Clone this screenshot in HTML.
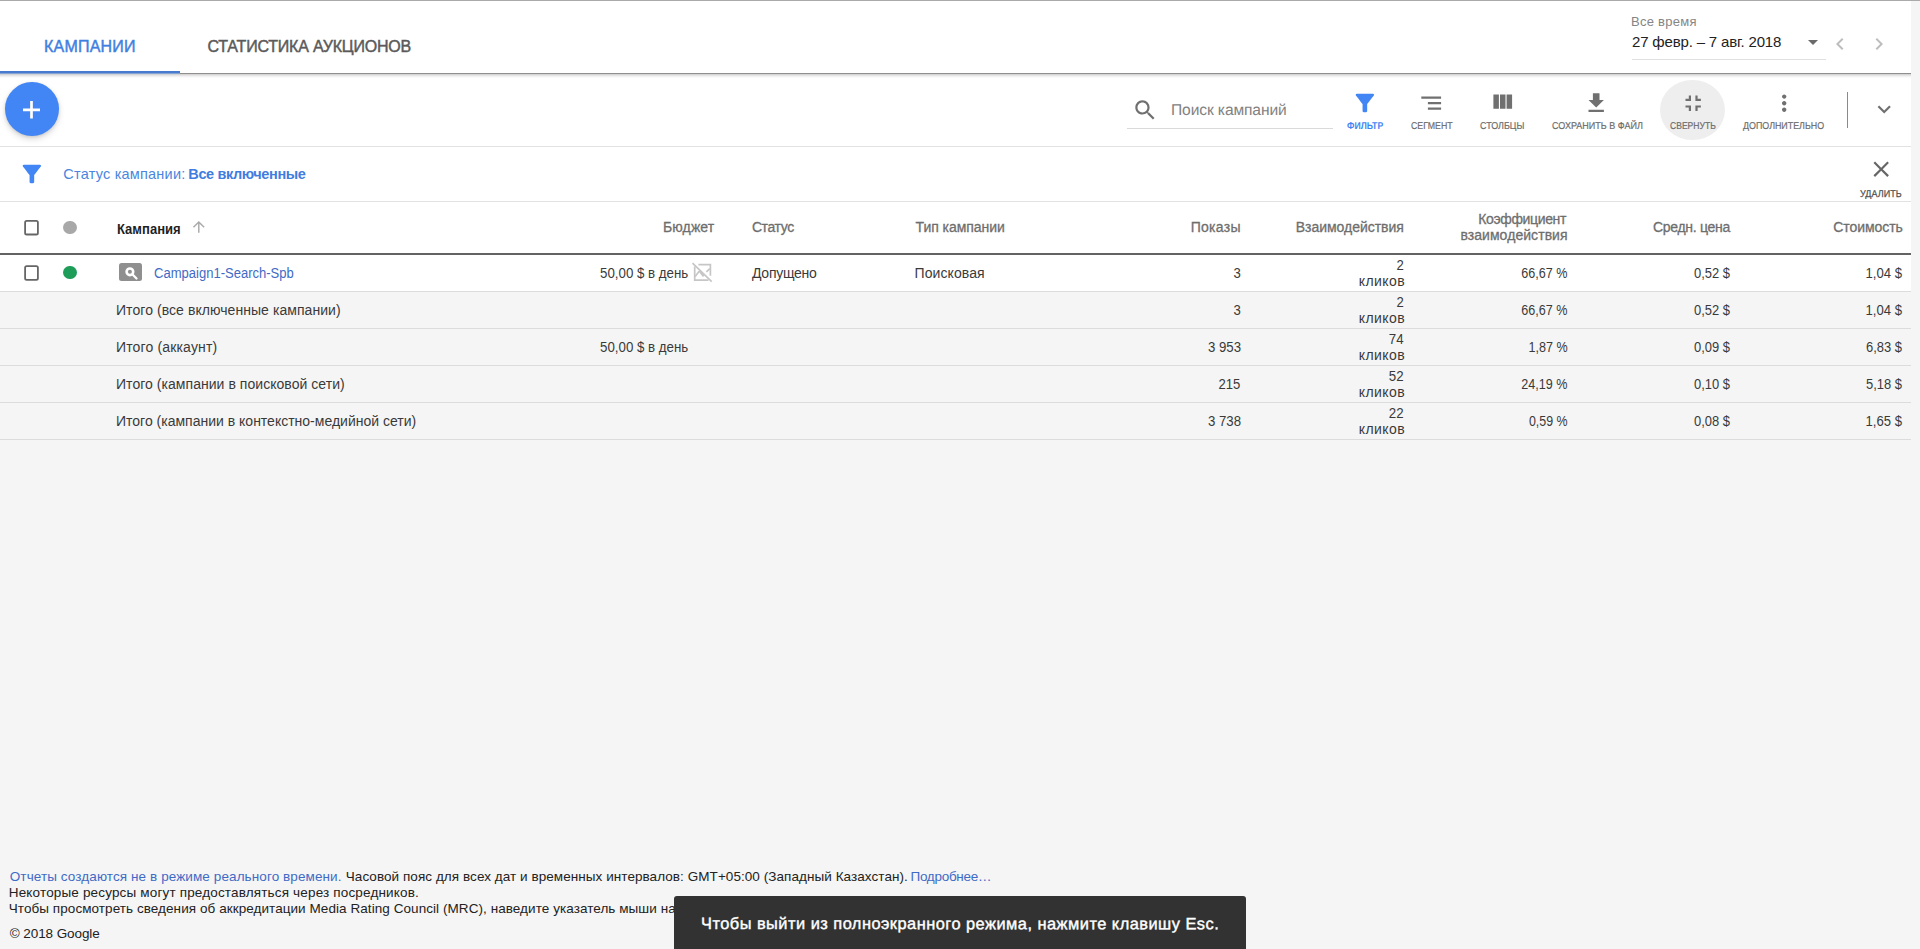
<!DOCTYPE html>
<html lang="ru">
<head>
<meta charset="utf-8">
<title>Кампании</title>
<style>
html,body{margin:0;padding:0;}
body{width:1920px;height:949px;overflow:hidden;background:#f5f5f5;position:relative;font-family:"Liberation Sans",sans-serif;}
.a{position:absolute;}
.t{position:absolute;white-space:nowrap;}
#page{position:absolute;left:0;top:0;width:1920px;height:949px;overflow:hidden;}
#topbar{left:0;top:0;width:1911px;height:73px;background:#fff;}
#topline{left:0;top:0;width:1920px;height:1px;background:#aaaaaa;}
#tabshadow{left:0;top:74px;width:1911px;height:4px;background:linear-gradient(rgba(0,0,0,.20) 0,rgba(0,0,0,.07) 2px,rgba(0,0,0,0) 4px);}
#tabborder{left:0;top:73px;width:1911px;height:1px;background:#8f8f8f;}
#tabline{left:0;top:71px;width:180px;height:2px;background:#487ad0;}
#tabline2{left:0;top:73px;width:180px;height:1px;background:#86a3d6;}
#toolbar{left:0;top:73px;width:1911px;height:73px;background:#fff;border-bottom:1px solid #e2e2e2;}
#filterrow{left:0;top:147px;width:1911px;height:54px;background:#fff;border-bottom:1px solid #e2e2e2;}
#thead{left:0;top:202px;width:1911px;height:51px;background:#fff;border-bottom:2px solid #636363;}
.row{left:0;width:1911px;height:36px;border-bottom:1px solid #dcdcdc;background:#f5f5f5;}
#row1{background:#fff;}
#fab{left:5.2px;top:82px;width:53.8px;height:53.8px;border-radius:50%;background:#4285f4;box-shadow:0 3px 6px rgba(0,0,0,.15),0 1px 3px rgba(0,0,0,.10);}
#hover{left:1660.3px;top:80px;width:64.4px;height:60px;border-radius:50%;background:#eeeeee;}
.cb{width:11px;height:11.8px;border:1.8px solid #686868;border-radius:2.2px;background:#fff;}
.dot{width:13.4px;height:13.4px;border-radius:50%;}
#toast{left:674px;top:896px;width:572px;height:60px;background:#323232;border-radius:3px 3px 0 0;z-index:9;}
svg{position:absolute;overflow:visible;}
</style>
</head>
<body>
<div id="page">
<div class="a" id="topbar"></div>
<div class="a" id="toolbar"></div>
<div class="a" id="tabshadow"></div>
<div class="a" id="tabborder"></div>
<div class="a" id="tabline"></div>
<div class="a" id="tabline2"></div>
<div class="a" id="topline"></div>
<div class="a" id="filterrow"></div>
<div class="a" id="thead"></div>
<div class="a row" id="row1" style="top:255px"></div>
<div class="a row" style="top:292px"></div>
<div class="a row" style="top:329px"></div>
<div class="a row" style="top:366px"></div>
<div class="a row" style="top:403px"></div>

<!-- date range -->
<div class="a" style="left:1632px;top:59px;width:194px;height:1px;background:#e0e0e0"></div>
<svg style="left:1801.00px;top:30.00px" width="24.00" height="24.00" viewBox="0 0 24 24"><path d="M7 10l5 5 5-5z" fill="#6a6a6a"/></svg>
<svg style="left:1827.80px;top:31.75px" width="24.00" height="24.00" viewBox="0 0 24 24"><path d="M15.41 7.41L14 6l-6 6 6 6 1.41-1.41L10.830 12z" fill="#bdbdbd"/></svg>
<svg style="left:1867.40px;top:31.75px" width="24.00" height="24.00" viewBox="0 0 24 24"><path d="M10 6L8.590 7.410 13.170 12l-4.580 4.590L10 18l6-6z" fill="#bdbdbd"/></svg>
<!-- FAB -->
<div class="a" id="fab"></div>
<svg style="left:23px;top:100.7px" width="17" height="17.6" viewBox="0 0 17 17.6"><path d="M8.5 0v17.6M0 8.8h17" stroke="#fff" stroke-width="2.7" fill="none"/></svg>
<!-- search -->
<svg style="left:1132.00px;top:96.90px" width="26.40" height="26.40" viewBox="0 0 24 24"><path d="M15.5 14h-.79l-.28-.27C15.410 12.590 16 11.110 16 9.500 16 5.910 13.090 3 9.500 3S3 5.910 3 9.500 5.910 16 9.500 16c1.610 0 3.090-.590 4.230-1.570l.27.28v.79l5 4.990L20.490 19l-4.990-5zm-6 0C7.010 14 5 11.990 5 9.500S7.010 5 9.500 5 14 7.010 14 9.500 11.990 14 9.500 14z" fill="#707070"/></svg>
<div class="a" style="left:1127px;top:128px;width:206px;height:1px;background:#dadada"></div>
<!-- toolbar icons -->
<svg style="left:1350.92px;top:88.55px" width="27.75" height="27.75" viewBox="0 0 24 24"><path d="M4.25 5.61C6.27 8.2 10 13 10 13v6c0 .55.45 1 1 1h2c.55 0 1-.45 1-1v-6s3.72-4.800 5.740-7.390c.51-.66.04-1.61-.79-1.61H5.040c-.83 0-1.300.950-.790 1.610z" fill="#4285f4"/></svg>
<svg style="left:1418.10px;top:89.60px" width="26.40" height="26.40" viewBox="0 0 24 24"><path d="M9 18h12v-2H9v2zM3 6v2h18V6H3zm6 7h12v-2H9v2z" fill="#707070"/></svg>
<svg style="left:1489.00px;top:89.30px" width="26.40" height="26.40" viewBox="0 0 24 24"><path d="M10 18h5V5h-5v13zm-6 0h5V5H4v13zM16 5v13h5V5h-5z" fill="#707070"/></svg>
<svg style="left:1583.40px;top:89.80px" width="26.40" height="26.40" viewBox="0 0 24 24"><path d="M19 9h-4V3H9v6H5l7 7 7-7zM5 18v2h14v-2H5z" fill="#707070"/></svg>
<div class="a" id="hover"></div>
<svg style="left:1679.50px;top:89.70px" width="26.40" height="26.40" viewBox="0 0 24 24"><path d="M5 16h3v3h2v-5H5v2zm3-8H5v2h5V5H8v3zm6 11h2v-3h3v-2h-5v5zm2-11V5h-2v5h5V8h-3z" fill="#707070"/></svg>
<svg style="left:1770.80px;top:89.80px" width="26.40" height="26.40" viewBox="0 0 24 24"><path d="M12 8c1.100 0 2-.9 2-2s-.9-2-2-2-2 .9-2 2 .9 2 2 2zm0 2c-1.100 0-2 .9-2 2s.9 2 2 2 2-.9 2-2-.9-2-2-2zm0 6c-1.100 0-2 .9-2 2s.9 2 2 2 2-.9 2-2-.9-2-2-2z" fill="#707070"/></svg>
<div class="a" style="left:1847px;top:92px;width:1px;height:36px;background:#8a8a8a"></div>
<svg style="left:1870.90px;top:95.90px" width="26.40" height="26.40" viewBox="0 0 24 24"><path d="M16.590 8.590L12 13.170 7.410 8.590 6 10l6 6 6-6z" fill="#707070"/></svg>
<!-- filter row -->
<svg style="left:17.57px;top:160.40px" width="27.75" height="27.75" viewBox="0 0 24 24"><path d="M4.25 5.61C6.27 8.2 10 13 10 13v6c0 .55.45 1 1 1h2c.55 0 1-.45 1-1v-6s3.72-4.800 5.740-7.390c.51-.66.04-1.61-.79-1.61H5.040c-.83 0-1.300.950-.790 1.610z" fill="#4285f4"/></svg>
<svg style="left:1867.80px;top:156.20px" width="26.40" height="26.40" viewBox="0 0 24 24"><path d="M19 6.410L17.590 5 12 10.590 6.410 5 5 6.410 10.590 12 5 17.590 6.410 19 12 13.410 17.590 19 19 17.590 13.410 12z" fill="#666"/></svg>
<!-- header -->
<svg style="left:20px;top:215px" width="24" height="24"><rect x="5.10" y="5.80" width="12.8" height="13.7" rx="1.6" fill="#fff" stroke="#666" stroke-width="1.8"/></svg>
<div class="a dot" style="left:63.3px;top:220.7px;background:#a8a8a8"></div>
<svg style="left:190.20px;top:218.10px" width="17.60" height="17.60" viewBox="0 0 24 24"><path d="M4 12l1.410 1.410L11 7.830V20h2V7.830l5.580 5.590L20 12l-8-8-8 8z" fill="#ababab"/></svg>
<!-- row 1 -->
<svg style="left:20px;top:261px" width="24" height="24"><rect x="5.10" y="5.10" width="12.8" height="13.7" rx="1.6" fill="#fff" stroke="#666" stroke-width="1.8"/></svg>
<div class="a dot" style="left:63.3px;top:265.9px;background:#1e9d58"></div>
<div class="a" style="left:119.3px;top:263.3px;width:22.7px;height:17.7px;border-radius:2.5px;background:#8f8f8f"></div>
<svg style="left:119px;top:263px" width="24" height="19" viewBox="0 0 24 19"><circle cx="10.9" cy="8.800" r="3.300" fill="none" stroke="#fff" stroke-width="2.600"/><path d="M13.600 11.500L17.500 15.500" stroke="#fff" stroke-width="2.300" stroke-linecap="round" fill="none"/></svg>
<svg style="left:686px;top:258px" width="34" height="28" viewBox="0 0 34 28"><g fill="none" stroke="#c6c6c6" stroke-width="1.7"><path d="M6.500 5.200L25.700 23.600"/><path d="M12.400 6.700H24.400V17.700"/><path d="M8.700 8.500V22.100H22.500"/><path d="M9.100 18.500L13.200 13.300"/><path d="M13.500 12.800L17.700 18.300" stroke-width="2.200"/><path d="M20.400 13.900L23.800 10.700"/></g></svg>

<!-- toast -->
<div class="a" id="toast"></div>
<span class="t" id="tab1" style="top:39.00px;font-size:16px;line-height:16px;color:#3f7fe0;letter-spacing:0.208px;left:44.00px;-webkit-text-stroke:0.45px;">КАМПАНИИ</span>
<span class="t" id="tab2" style="top:39.00px;font-size:16px;line-height:16px;color:#5a5a5a;letter-spacing:-0.207px;left:207.50px;-webkit-text-stroke:0.45px;">СТАТИСТИКА АУКЦИОНОВ</span>
<span class="t" id="d1" style="top:15.00px;font-size:13px;line-height:13px;color:#858585;letter-spacing:0.260px;left:1631.00px;">Все время</span>
<span class="t" id="d2" style="top:34.00px;font-size:15px;line-height:15px;color:#222;letter-spacing:-0.167px;left:1632.00px;">27 февр. – 7 авг. 2018</span>
<span class="t" id="s1" style="top:101.93px;font-size:15.6px;line-height:15.6px;color:#828282;letter-spacing:-0.118px;left:1171.00px;transform:matrix(1.0000,0.0006,0,1,0,0);transform-origin:0 0;">Поиск кампаний</span>
<span class="t" id="b1" style="top:120.97px;font-size:10px;line-height:10px;color:#4285f4;font-weight:700;left:1346.50px;transform:matrix(0.8685,0.0006,0,1,0,0);transform-origin:0 0;">ФИЛЬТР</span>
<span class="t" id="b2" style="top:120.97px;font-size:10px;line-height:10px;color:#6c6c6c;left:1410.50px;transform:matrix(0.8774,0.0006,0,1,0,0);transform-origin:0 0;-webkit-text-stroke:0.2px;">СЕГМЕНТ</span>
<span class="t" id="b3" style="top:120.97px;font-size:10px;line-height:10px;color:#6c6c6c;left:1479.50px;transform:matrix(0.8947,0.0006,0,1,0,0);transform-origin:0 0;-webkit-text-stroke:0.2px;">СТОЛБЦЫ</span>
<span class="t" id="b4" style="top:120.94px;font-size:10px;line-height:10px;color:#6c6c6c;left:1551.70px;transform:matrix(0.9010,0.0006,0,1,0,0);transform-origin:0 0;-webkit-text-stroke:0.2px;">СОХРАНИТЬ В ФАЙЛ</span>
<span class="t" id="b5" style="top:120.97px;font-size:10px;line-height:10px;color:#6c6c6c;left:1669.60px;transform:matrix(0.8569,0.0006,0,1,0,0);transform-origin:0 0;-webkit-text-stroke:0.2px;">СВЕРНУТЬ</span>
<span class="t" id="b6" style="top:120.95px;font-size:10px;line-height:10px;color:#6c6c6c;left:1743.30px;transform:matrix(0.8885,0.0006,0,1,0,0);transform-origin:0 0;-webkit-text-stroke:0.2px;">ДОПОЛНИТЕЛЬНО</span>
<span class="t" id="b7" style="top:188.97px;font-size:10px;line-height:10px;color:#505050;left:1860.00px;transform:matrix(0.9047,0.0006,0,1,0,0);transform-origin:0 0;-webkit-text-stroke:0.25px;">УДАЛИТЬ</span>
<span class="t" id="f1" style="top:167.00px;font-size:14.5px;line-height:14.5px;color:#4a86e0;letter-spacing:0.214px;left:63.30px;">Статус кампании:</span>
<span class="t" id="f2" style="top:167.00px;font-size:14.5px;line-height:14.5px;color:#3f7de0;font-weight:700;letter-spacing:-0.377px;left:188.30px;">Все включенные</span>
<span class="t" id="h1" style="top:222.00px;font-size:14px;line-height:14px;color:#1f1f1f;font-weight:700;left:117.30px;transform:scaleX(0.9316);transform-origin:0 0;">Кампания</span>
<span class="t" id="h2" style="top:220.00px;font-size:14px;line-height:14px;color:#6e6e6e;letter-spacing:0.113px;left:663.00px;-webkit-text-stroke:0.3px;">Бюджет</span>
<span class="t" id="h3" style="top:220.00px;font-size:14px;line-height:14px;color:#6e6e6e;letter-spacing:-0.391px;left:751.90px;-webkit-text-stroke:0.3px;">Статус</span>
<span class="t" id="h4" style="top:220.00px;font-size:14px;line-height:14px;color:#6e6e6e;letter-spacing:-0.045px;left:915.50px;-webkit-text-stroke:0.3px;">Тип кампании</span>
<span class="t" id="h5" style="top:220.00px;font-size:14px;line-height:14px;color:#6e6e6e;letter-spacing:0.274px;right:679.26px;-webkit-text-stroke:0.3px;">Показы</span>
<span class="t" id="h6" style="top:220.00px;font-size:14px;line-height:14px;color:#6e6e6e;letter-spacing:-0.024px;right:516.14px;-webkit-text-stroke:0.3px;">Взаимодействия</span>
<span class="t" id="h7a" style="top:212.00px;font-size:14px;line-height:14px;color:#6e6e6e;letter-spacing:-0.350px;right:353.94px;-webkit-text-stroke:0.3px;">Коэффициент</span>
<span class="t" id="h7b" style="top:228.00px;font-size:14px;line-height:14px;color:#6e6e6e;letter-spacing:0.057px;right:352.36px;-webkit-text-stroke:0.3px;">взаимодействия</span>
<span class="t" id="h8" style="top:220.00px;font-size:14px;line-height:14px;color:#6e6e6e;letter-spacing:-0.293px;right:190.01px;-webkit-text-stroke:0.3px;">Средн. цена</span>
<span class="t" id="h9" style="top:220.00px;font-size:14px;line-height:14px;color:#6e6e6e;letter-spacing:-0.062px;right:17.27px;-webkit-text-stroke:0.3px;">Стоимость</span>
<span class="t" id="r1n" style="top:266.00px;font-size:14px;line-height:14px;color:#3f6bc6;left:153.50px;transform:scaleX(0.9308);transform-origin:0 0;">Campaign1-Search-Spb</span>
<span class="t" id="r1b" style="top:266.00px;font-size:14px;line-height:14px;color:#3a3a3a;left:599.50px;transform:scaleX(0.9502);transform-origin:0 0;">50,00 $ в день</span>
<span class="t" id="r1s" style="top:266.00px;font-size:14px;line-height:14px;color:#3a3a3a;letter-spacing:-0.269px;left:752.00px;">Допущено</span>
<span class="t" id="r1t" style="top:266.00px;font-size:14px;line-height:14px;color:#3a3a3a;letter-spacing:0.087px;left:914.50px;">Поисковая</span>
<span class="t" id="r2n" style="top:303.00px;font-size:14px;line-height:14px;color:#3a3a3a;letter-spacing:0.062px;left:116.00px;">Итого (все включенные кампании)</span>
<span class="t" id="r3n" style="top:340.00px;font-size:14px;line-height:14px;color:#3a3a3a;letter-spacing:0.153px;left:116.00px;">Итого (аккаунт)</span>
<span class="t" id="r3b" style="top:340.00px;font-size:14px;line-height:14px;color:#3a3a3a;left:599.50px;transform:scaleX(0.9502);transform-origin:0 0;">50,00 $ в день</span>
<span class="t" id="r4n" style="top:377.00px;font-size:14px;line-height:14px;color:#3a3a3a;letter-spacing:0.043px;left:116.00px;">Итого (кампании в поисковой сети)</span>
<span class="t" id="r5n" style="top:414.00px;font-size:14px;line-height:14px;color:#3a3a3a;letter-spacing:0.001px;left:116.00px;">Итого (кампании в контекстно-медийной сети)</span>
<span class="t" id="n0a" style="top:266.00px;font-size:14px;line-height:14px;color:#3a3a3a;right:679.40px;transform:scaleX(0.9375);transform-origin:100% 0;">3</span>
<span class="t" id="n0b" style="top:258.00px;font-size:14px;line-height:14px;color:#3a3a3a;right:516.00px;transform:scaleX(0.9375);transform-origin:100% 0;">2</span>
<span class="t" id="n0k" style="top:274.00px;font-size:14px;line-height:14px;color:#3a3a3a;letter-spacing:0.422px;right:514.94px;">кликов</span>
<span class="t" id="n0c" style="top:266.00px;font-size:14px;line-height:14px;color:#3a3a3a;right:352.60px;transform:scaleX(0.8984);transform-origin:100% 0;">66,67 %</span>
<span class="t" id="n0d" style="top:266.00px;font-size:14px;line-height:14px;color:#3a3a3a;right:189.70px;transform:scaleX(0.9249);transform-origin:100% 0;">0,52 $</span>
<span class="t" id="n0e" style="top:266.00px;font-size:14px;line-height:14px;color:#3a3a3a;right:17.70px;transform:scaleX(0.9361);transform-origin:100% 0;">1,04 $</span>
<span class="t" id="n1a" style="top:303.00px;font-size:14px;line-height:14px;color:#3a3a3a;right:679.40px;transform:scaleX(0.9375);transform-origin:100% 0;">3</span>
<span class="t" id="n1b" style="top:295.00px;font-size:14px;line-height:14px;color:#3a3a3a;right:516.00px;transform:scaleX(0.9375);transform-origin:100% 0;">2</span>
<span class="t" id="n1k" style="top:311.00px;font-size:14px;line-height:14px;color:#3a3a3a;letter-spacing:0.422px;right:514.94px;">кликов</span>
<span class="t" id="n1c" style="top:303.00px;font-size:14px;line-height:14px;color:#3a3a3a;right:352.60px;transform:scaleX(0.8984);transform-origin:100% 0;">66,67 %</span>
<span class="t" id="n1d" style="top:303.00px;font-size:14px;line-height:14px;color:#3a3a3a;right:189.70px;transform:scaleX(0.9249);transform-origin:100% 0;">0,52 $</span>
<span class="t" id="n1e" style="top:303.00px;font-size:14px;line-height:14px;color:#3a3a3a;right:17.70px;transform:scaleX(0.9361);transform-origin:100% 0;">1,04 $</span>
<span class="t" id="n2a" style="top:340.00px;font-size:14px;line-height:14px;color:#3a3a3a;right:679.40px;transform:scaleX(0.9447);transform-origin:100% 0;">3 953</span>
<span class="t" id="n2b" style="top:332.00px;font-size:14px;line-height:14px;color:#3a3a3a;right:516.00px;transform:scaleX(0.9502);transform-origin:100% 0;">74</span>
<span class="t" id="n2k" style="top:348.00px;font-size:14px;line-height:14px;color:#3a3a3a;letter-spacing:0.422px;right:514.94px;">кликов</span>
<span class="t" id="n2c" style="top:340.00px;font-size:14px;line-height:14px;color:#3a3a3a;right:352.60px;transform:scaleX(0.8971);transform-origin:100% 0;">1,87 %</span>
<span class="t" id="n2d" style="top:340.00px;font-size:14px;line-height:14px;color:#3a3a3a;right:189.70px;transform:scaleX(0.9249);transform-origin:100% 0;">0,09 $</span>
<span class="t" id="n2e" style="top:340.00px;font-size:14px;line-height:14px;color:#3a3a3a;right:17.70px;transform:scaleX(0.9249);transform-origin:100% 0;">6,83 $</span>
<span class="t" id="n3a" style="top:377.00px;font-size:14px;line-height:14px;color:#3a3a3a;right:679.40px;transform:scaleX(0.9333);transform-origin:100% 0;">215</span>
<span class="t" id="n3b" style="top:369.00px;font-size:14px;line-height:14px;color:#3a3a3a;right:516.00px;transform:scaleX(0.9502);transform-origin:100% 0;">52</span>
<span class="t" id="n3k" style="top:385.00px;font-size:14px;line-height:14px;color:#3a3a3a;letter-spacing:0.422px;right:514.94px;">кликов</span>
<span class="t" id="n3c" style="top:377.00px;font-size:14px;line-height:14px;color:#3a3a3a;right:352.60px;transform:scaleX(0.8984);transform-origin:100% 0;">24,19 %</span>
<span class="t" id="n3d" style="top:377.00px;font-size:14px;line-height:14px;color:#3a3a3a;right:189.70px;transform:scaleX(0.9249);transform-origin:100% 0;">0,10 $</span>
<span class="t" id="n3e" style="top:377.00px;font-size:14px;line-height:14px;color:#3a3a3a;right:17.70px;transform:scaleX(0.9249);transform-origin:100% 0;">5,18 $</span>
<span class="t" id="n4a" style="top:414.00px;font-size:14px;line-height:14px;color:#3a3a3a;right:679.40px;transform:scaleX(0.9447);transform-origin:100% 0;">3 738</span>
<span class="t" id="n4b" style="top:406.00px;font-size:14px;line-height:14px;color:#3a3a3a;right:516.00px;transform:scaleX(0.9502);transform-origin:100% 0;">22</span>
<span class="t" id="n4k" style="top:422.00px;font-size:14px;line-height:14px;color:#3a3a3a;letter-spacing:0.422px;right:514.94px;">кликов</span>
<span class="t" id="n4c" style="top:414.00px;font-size:14px;line-height:14px;color:#3a3a3a;right:352.60px;transform:scaleX(0.8867);transform-origin:100% 0;">0,59 %</span>
<span class="t" id="n4d" style="top:414.00px;font-size:14px;line-height:14px;color:#3a3a3a;right:189.70px;transform:scaleX(0.9249);transform-origin:100% 0;">0,08 $</span>
<span class="t" id="n4e" style="top:414.00px;font-size:14px;line-height:14px;color:#3a3a3a;right:17.70px;transform:scaleX(0.9361);transform-origin:100% 0;">1,65 $</span>
<span class="t" id="ft1" style="top:870.00px;font-size:13.5px;line-height:13.5px;color:#3f6bc6;letter-spacing:0.098px;left:9.75px;">Отчеты создаются не в режиме реального времени.</span>
<span class="t" id="ft2" style="top:870.00px;font-size:13.5px;line-height:13.5px;color:#222;letter-spacing:0.062px;left:345.75px;">Часовой пояс для всех дат и временных интервалов: GMT+05:00 (Западный Казахстан).</span>
<span class="t" id="ft3" style="top:870.00px;font-size:13.5px;line-height:13.5px;color:#3f6bc6;letter-spacing:-0.279px;left:910.50px;">Подробнее…</span>
<span class="t" id="ft4" style="top:886.00px;font-size:13.5px;line-height:13.5px;color:#222;letter-spacing:0.164px;left:8.75px;">Некоторые ресурсы могут предоставляться через посредников.</span>
<span class="t" id="ft5" style="top:902.00px;font-size:13.5px;line-height:13.5px;color:#222;letter-spacing:0.065px;left:8.75px;">Чтобы просмотреть сведения об аккредитации Media Rating Council (MRC), наведите указатель мыши на</span>
<span class="t" id="ft6" style="top:927.00px;font-size:13.5px;line-height:13.5px;color:#222;letter-spacing:-0.084px;left:9.75px;">© 2018 Google</span>
<span class="t" id="toastt" style="top:914.69px;font-size:16.4px;line-height:16.4px;color:#fff;letter-spacing:0.474px;left:700.50px;transform:matrix(1.0000,0.0006,0,1,0,0);transform-origin:0 0;-webkit-text-stroke:0.4px;z-index:10;">Чтобы выйти из полноэкранного режима, нажмите клавишу Esc.</span>
</div>
</body>
</html>
